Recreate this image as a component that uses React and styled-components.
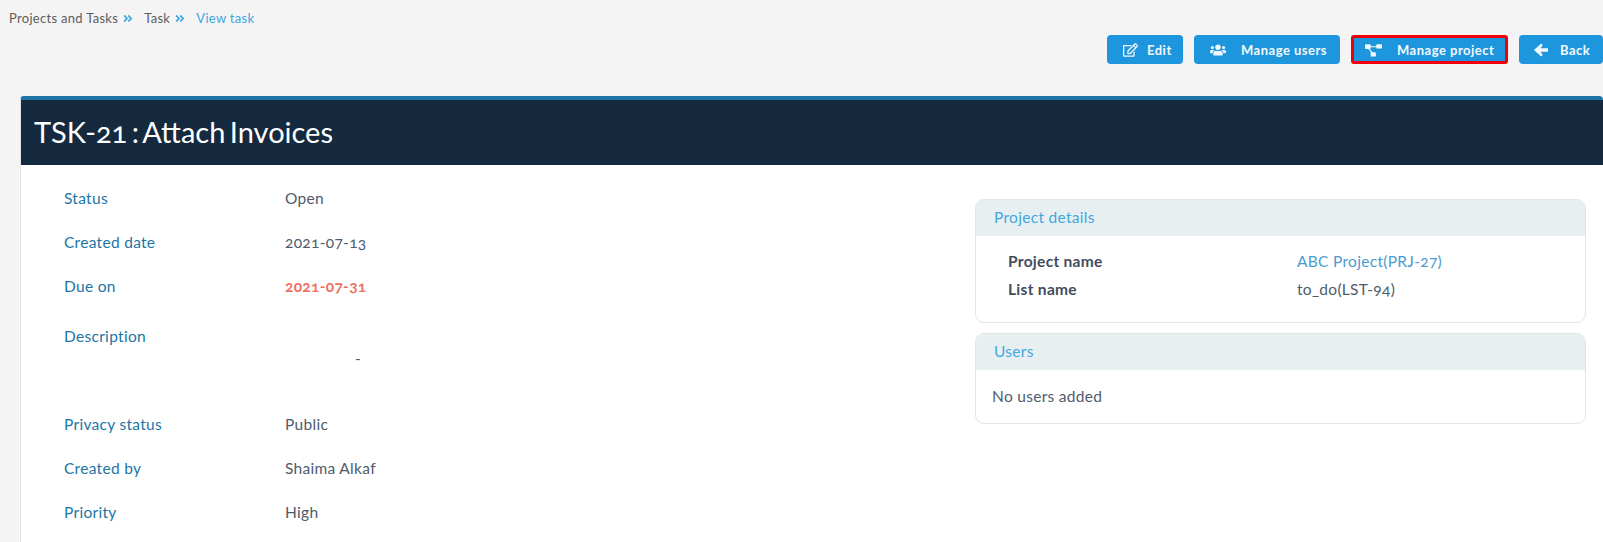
import React from 'react'
import styled, { createGlobalStyle } from 'styled-components'
import { FaAngleDoubleRight, FaRegEdit, FaUsers } from 'react-icons/fa'

const GlobalStyle = createGlobalStyle`
  html, body {
    margin: 0;
    height: 100%;
    overflow: hidden;
    background: #f4f4f4;
  }
  body {
    font-family: 'Lato', 'Open Sans', sans-serif;
    font-variant-numeric: oldstyle-nums;
    color: #4f5b6b;
  }
`

const Page = styled.div`
  display: flex;
  flex-direction: column;
  width: 1603px;
  height: 542px;
  overflow: hidden;
`

const Breadcrumbs = styled.nav`
  display: flex;
  align-items: center;
  height: 18px;
  margin: 9px 0 0 9px;
  font-size: 13px;
  letter-spacing: 0.3px;
`

const Crumb = styled.span`
  color: ${(p) => (p.$active ? '#3fa7e2' : '#5d5d5d')};
`

const CrumbArrow = styled(FaAngleDoubleRight)`
  width: 10px;
  height: 11px;
  margin: 0 11px 0 5px;
  color: #3fa7e2;
`

const Toolbar = styled.div`
  display: flex;
  justify-content: flex-end;
  gap: 11px;
  margin-top: 8px;
`

const Button = styled.button`
  display: flex;
  align-items: center;
  box-sizing: border-box;
  width: ${(p) => p.$width}px;
  height: 29px;
  padding: 0 0 0 ${(p) => p.$pad}px;
  border: ${(p) => (p.$marked ? '3px solid #f00004' : 'none')};
  border-radius: ${(p) => (p.$marked ? '3px' : '4px')};
  background: #1e96dd;
  color: #f4f9fd;
  font: 700 13px 'Lato', sans-serif;
  letter-spacing: 0.5px;
  svg {
    flex: none;
    width: ${(p) => p.$iconWidth || 16}px;
    height: 14px;
    margin-right: ${(p) => p.$gap}px;
  }
`

const Card = styled.section`
  flex: 1;
  margin: 32px 0 0 20px;
  border-top: 4px solid #1b75a5;
  border-left: 1px solid #e3e3e3;
  border-radius: 4px 4px 0 0;
  background: #fff;
`

const CardHead = styled.h1`
  display: flex;
  align-items: center;
  box-sizing: border-box;
  height: 65px;
  margin: 0;
  padding: 0 0 3px 13px;
  background: #152a3f;
  color: #fff;
  font-size: 29px;
  font-weight: 400;
  word-spacing: -3px;
`

const CardBody = styled.div`
  display: flex;
  justify-content: space-between;
  padding: 11px 17px 0 43px;
`

const Details = styled.dl`
  display: grid;
  grid-template-columns: 221px 1fr;
  grid-template-rows: 44px 44px 44px 94px;
  grid-auto-rows: 44px;
  align-content: start;
  width: 500px;
  margin: 0;
  font-size: 15.5px;
  letter-spacing: 0.3px;
`

const Term = styled.dt`
  display: flex;
  align-items: center;
  color: #1b75a5;
`

const Value = styled.dd`
  display: flex;
  align-items: center;
  margin: 0;
  color: ${(p) => (p.$danger ? '#ef6f62' : '#4f5b6b')};
  font-weight: ${(p) => (p.$danger ? 700 : 400)};
`

const DescriptionTerm = styled(Term)`
  align-items: flex-start;
  padding-top: 19px;
`

const DescriptionValue = styled(Value)`
  align-items: flex-start;
  padding: 41px 0 0 70px;
`

const Side = styled.aside`
  display: flex;
  flex-direction: column;
  gap: 10px;
  width: 611px;
  margin-top: 23px;
`

const Panel = styled.div`
  overflow: hidden;
  border: 1px solid #e2e4e6;
  border-radius: 9px;
  background: #fff;
`

const PanelHead = styled.h2`
  display: flex;
  align-items: center;
  height: 36px;
  margin: 0;
  padding: 0 0 2px 18px;
  box-sizing: border-box;
  background: #e8eff1;
  color: #3fa7e2;
  font-size: 15.5px;
  font-weight: 400;
  letter-spacing: 0.3px;
`

const PanelRows = styled.div`
  display: grid;
  grid-template-columns: 289px 1fr;
  grid-auto-rows: 28px;
  padding: 11px 0 19px 32px;
  font-size: 15.5px;
  letter-spacing: 0.3px;
`

const PanelLabel = styled.div`
  display: flex;
  align-items: center;
  color: #434c5c;
  font-weight: 700;
`

const PanelValue = styled.div`
  display: flex;
  align-items: center;
  color: ${(p) => (p.$link ? '#4b9bcf' : '#4f5b6b')};
`

const EmptyNote = styled.div`
  padding: 17px 16px 18px;
  font-size: 15.5px;
  line-height: 18px;
  letter-spacing: 0.3px;
`

const ProjectIcon = () => (
  <svg viewBox="0 0 18 14" fill="currentColor">
    <rect x="0" y="1" width="6" height="5" rx="1" />
    <rect x="12" y="1" width="6" height="4.5" rx="1" />
    <rect x="6" y="9.5" width="5.5" height="4.5" rx="1" />
    <path d="M5 3h8v1.2H5zM4.4 5l4 5-1 .8-4-5z" />
  </svg>
)

const BackIcon = () => (
  <svg viewBox="0 0 14 14" fill="currentColor">
    <path d="M7.2.6 0 7l7.2 6.4 1.5-1.5-2-3.2H14V5.3H6.7l2-3.2z" />
  </svg>
)

const rows = [
  ['Status', 'Open'],
  ['Created date', '2021-07-13'],
  ['Due on', '2021-07-31', true],
]

const moreRows = [
  ['Privacy status', 'Public'],
  ['Created by', 'Shaima Alkaf'],
  ['Priority', 'High'],
]

const DetailRow = ({ label, value, danger }) => (
  <>
    <Term>{label}</Term>
    <Value $danger={danger}>{value}</Value>
  </>
)

export default function App() {
  return (
    <Page>
      <GlobalStyle />
      <Breadcrumbs>
        <Crumb>Projects and Tasks</Crumb>
        <CrumbArrow />
        <Crumb>Task</Crumb>
        <CrumbArrow />
        <Crumb $active>View task</Crumb>
      </Breadcrumbs>

      <Toolbar>
        <Button $width={76} $pad={16} $gap={9} $iconWidth={15}><FaRegEdit />Edit</Button>
        <Button $width={146} $pad={16} $gap={15}><FaUsers />Manage users</Button>
        <Button $width={157} $pad={11} $gap={15} $iconWidth={17} $marked><ProjectIcon />Manage project</Button>
        <Button $width={84} $pad={15} $gap={12} $iconWidth={14}><BackIcon />Back</Button>
      </Toolbar>

      <Card>
        <CardHead>TSK-21 : Attach Invoices</CardHead>
        <CardBody>
          <Details>
            {rows.map(([label, value, danger]) => (
              <DetailRow key={label} label={label} value={value} danger={danger} />
            ))}
            <DescriptionTerm>Description</DescriptionTerm>
            <DescriptionValue>-</DescriptionValue>
            {moreRows.map(([label, value]) => (
              <DetailRow key={label} label={label} value={value} />
            ))}
          </Details>

          <Side>
            <Panel>
              <PanelHead>Project details</PanelHead>
              <PanelRows>
                <PanelLabel>Project name</PanelLabel>
                <PanelValue $link>ABC Project(PRJ-27)</PanelValue>
                <PanelLabel>List name</PanelLabel>
                <PanelValue>to_do(LST-94)</PanelValue>
              </PanelRows>
            </Panel>
            <Panel>
              <PanelHead>Users</PanelHead>
              <EmptyNote>No users added</EmptyNote>
            </Panel>
          </Side>
        </CardBody>
      </Card>
    </Page>
  )
}
